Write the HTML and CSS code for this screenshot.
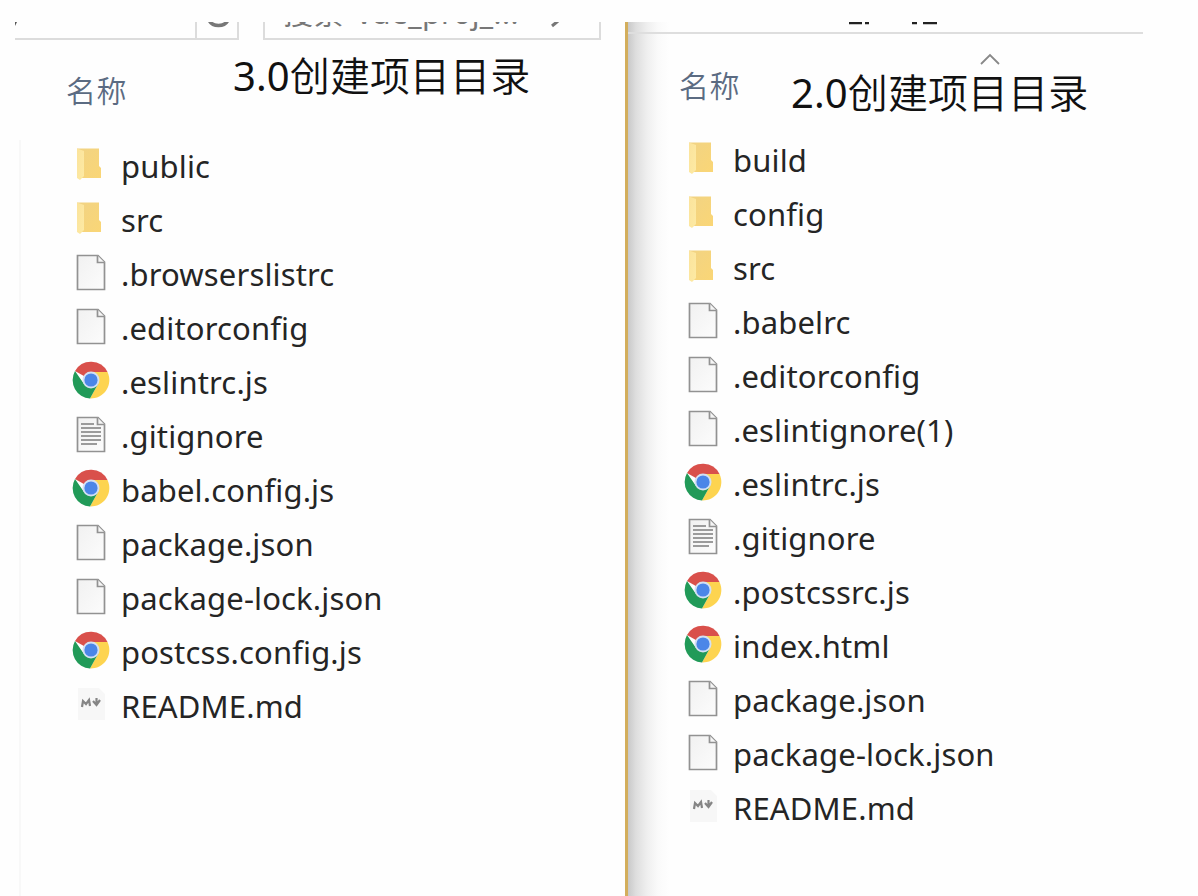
FILE: index.html
```
<!DOCTYPE html>
<html lang="zh-CN">
<head>
    <meta charset="UTF-8">
    <meta name="viewport" content="width=device-width, initial-scale=1.0">
    <title>项目目录</title>
    <link rel="stylesheet" href="styles.css">
</head>
<body>
    <svg class="sprite" aria-hidden="true">
        <defs>
            <linearGradient id="folder-front" x1="0" y1="0" x2="1" y2="1">
                <stop offset="0" stop-color="#fbe39b"/>
                <stop offset="1" stop-color="#fdeaa4"/>
            </linearGradient>
            <linearGradient id="folder-back" x1="0" y1="0" x2="1" y2="1">
                <stop offset="0" stop-color="#f1d384"/>
                <stop offset="1" stop-color="#fad676"/>
            </linearGradient>
            <linearGradient id="paper" x1="0" y1="0" x2="1" y2="1">
                <stop offset="0" stop-color="#f1f1f1"/>
                <stop offset="1" stop-color="#fcfcfc"/>
            </linearGradient>
        </defs>
        <symbol id="folder" viewBox="0 0 38 38">
            <path d="M5 3.500H27V21L29 23V33H9Z" fill="url(#folder-back)"/>
            <path d="M5 3.500L12 6V31L8 35L5 33Z" fill="url(#folder-front)"/>
        </symbol>
        <symbol id="file" viewBox="0 0 38 38">
            <path d="M5.500 2.500H26L32.500 9V36.500H5.500Z" fill="url(#paper)" stroke="#929292" stroke-width="1.700"/>
            <path d="M25.500 2.500V9.500H32.500" fill="#f5f5f5" stroke="#929292" stroke-width="1.700"/>
        </symbol>
        <symbol id="text" viewBox="0 0 38 38">
            <use href="#file"/>
            <path d="M9 9H22M9 13H29M9 17H29M9 21H29M9 25H29M9 29H25" stroke="#9b9b9b" stroke-width="1.800"/>
        </symbol>
        <symbol id="chrome" viewBox="0 0 38 38">
            <path d="M19 19L3 10A18.500 18.500 0 0 1 35.500 11Z" fill="#d9504b"/>
            <path d="M19 11H35.500A18.500 18.500 0 0 1 18 37.500L26 23Z" fill="#fdd450"/>
            <path d="M3 10A18.500 18.500 0 0 0 18 37.500L26 23L12 23Z" fill="#219a58"/>
            <circle cx="19" cy="19" r="8.500" fill="#d3e0f3"/>
            <circle cx="19" cy="19" r="6.600" fill="#4b86e8"/>
        </symbol>
        <symbol id="markdown" viewBox="0 0 38 38">
            <path d="M6 3H27L33 9V35H6Z" fill="#f7f7f7"/>
            <path d="M10 22L11 16L14 19L17 15L18 21M24.500 13V19M21 16L24.500 20L28 15" fill="none" stroke="#858585" stroke-width="2.200"/>
        </symbol>
    </svg>

    <div class="screen">
        <div class="pane pane-left">
            <div class="toolbar">
                <div class="address">
                    <svg width="4" height="4" viewBox="0 0 4 4"><path d="M0 4V0H2Z" fill="#555"/></svg>
                </div>
                <div class="refresh">
                    <svg width="30" height="8" viewBox="0 0 30 8"><path d="M4 -2A10 8 0 0 0 23 -2" fill="none" stroke="#777" stroke-width="3.500"/></svg>
                </div>
                <div class="search">
                    <span class="search-text">搜索"vue_proj_..."</span>
                    <svg width="12" height="8" viewBox="0 0 12 8"><path d="M9 -1L3 4" stroke="#777" stroke-width="3"/></svg>
                </div>
            </div>
            <div class="heading">
                <span class="column-name">名称</span>
                <h1 class="title"><span class="version">3.0</span>创建项目目录</h1>
            </div>
            <ul class="files">
                <li><svg class="icon"><use href="#folder"/></svg><span>public</span></li>
                <li><svg class="icon"><use href="#folder"/></svg><span>src</span></li>
                <li><svg class="icon"><use href="#file"/></svg><span>.browserslistrc</span></li>
                <li><svg class="icon"><use href="#file"/></svg><span>.editorconfig</span></li>
                <li><svg class="icon"><use href="#chrome"/></svg><span>.eslintrc.js</span></li>
                <li><svg class="icon"><use href="#text"/></svg><span>.gitignore</span></li>
                <li><svg class="icon"><use href="#chrome"/></svg><span>babel.config.js</span></li>
                <li><svg class="icon"><use href="#file"/></svg><span>package.json</span></li>
                <li><svg class="icon"><use href="#file"/></svg><span>package-lock.json</span></li>
                <li><svg class="icon"><use href="#chrome"/></svg><span>postcss.config.js</span></li>
                <li><svg class="icon"><use href="#markdown"/></svg><span>README.md</span></li>
            </ul>
        </div>

        <div class="pane pane-right">
            <div class="ribbon">
                <svg width="100" height="3" viewBox="0 0 100 3"><path d="M2 1H15M18 1H22M65 1H70M76 1H90" stroke="#222" stroke-width="2.500"/></svg>
            </div>
            <svg class="sort-arrow" viewBox="0 0 20 12"><path d="M1 11L10 2L19 11" fill="none" stroke="#888" stroke-width="1.800"/></svg>
            <div class="heading">
                <span class="column-name">名称</span>
                <h1 class="title"><span class="version">2.0</span>创建项目目录</h1>
            </div>
            <ul class="files">
                <li><svg class="icon"><use href="#folder"/></svg><span>build</span></li>
                <li><svg class="icon"><use href="#folder"/></svg><span>config</span></li>
                <li><svg class="icon"><use href="#folder"/></svg><span>src</span></li>
                <li><svg class="icon"><use href="#file"/></svg><span>.babelrc</span></li>
                <li><svg class="icon"><use href="#file"/></svg><span>.editorconfig</span></li>
                <li><svg class="icon"><use href="#file"/></svg><span>.eslintignore(1)</span></li>
                <li><svg class="icon"><use href="#chrome"/></svg><span>.eslintrc.js</span></li>
                <li><svg class="icon"><use href="#text"/></svg><span>.gitignore</span></li>
                <li><svg class="icon"><use href="#chrome"/></svg><span>.postcssrc.js</span></li>
                <li><svg class="icon"><use href="#chrome"/></svg><span>index.html</span></li>
                <li><svg class="icon"><use href="#file"/></svg><span>package.json</span></li>
                <li><svg class="icon"><use href="#file"/></svg><span>package-lock.json</span></li>
                <li><svg class="icon"><use href="#markdown"/></svg><span>README.md</span></li>
            </ul>
        </div>
    </div>
</body>
</html>
```
FILE: styles.css
```
* {
    box-sizing: border-box;
}
body {
    margin: 0;
    padding: 22px 55px 0 15px;
    height: 896px;
    overflow: hidden;
    background: #fefefe;
    color: #252525;
    font-family: "Noto Sans", "Noto Sans CJK SC", sans-serif;
}
svg {
    display: block;
    flex-shrink: 0;
}
.sprite {
    position: absolute;
    width: 0;
    height: 0;
}
.screen {
    display: flex;
    height: 874px;
}
.pane {
    display: flex;
    flex-direction: column;
}
.pane-left {
    width: 610px;
}
.pane-right {
    flex: 1;
    border-left: 3px solid #d3ae5c;
    background: linear-gradient(to right, #c9c9c9 0, #dedede 8px, #efefef 19px, #fafafa 30px, #fefefe 42px);
}
.toolbar {
    display: flex;
    height: 18px;
    overflow: hidden;
}
.address {
    width: 180px;
    border-bottom: 2px solid #dcdcdc;
}
.refresh {
    width: 44px;
    padding-left: 8px;
    border: solid #dcdcdc;
    border-width: 0 2px 2px;
}
.search {
    display: flex;
    justify-content: space-between;
    width: 338px;
    margin-left: 24px;
    padding: 0 38px 0 18px;
    overflow: hidden;
    border: solid #dcdcdc;
    border-width: 0 2px 2px;
}
.search-text {
    margin-top: -25px;
    color: #777;
    font-size: 30px;
    line-height: 32px;
    letter-spacing: 0.4px;
    white-space: nowrap;
}
.heading {
    display: flex;
    align-items: flex-start;
}
.column-name {
    color: #5b6b82;
    font-family: "Noto Sans CJK SC", sans-serif;
    font-size: 30px;
    font-weight: 350;
    line-height: 40px;
    letter-spacing: 0.5px;
}
.title {
    margin: 0;
    color: #111;
    font-size: 40px;
    font-weight: 350;
    line-height: 56px;
    letter-spacing: 0.1px;
    white-space: nowrap;
}
.version {
    font-weight: 400;
}
.pane-left .heading {
    height: 100px;
    padding: 8px 0 0 51px;
}
.pane-left .column-name {
    padding-top: 21px;
}
.pane-left .title {
    margin-left: 106px;
}
.ribbon {
    height: 12px;
    padding-left: 219px;
    border-bottom: 2px solid #dedede;
}
.sort-arrow {
    width: 20px;
    height: 12px;
    margin: 19px 0 0 352px;
}
.pane-right .heading {
    height: 69px;
    padding-left: 51px;
}
.pane-right .column-name {
    margin-top: -1px;
}
.pane-right .title {
    margin-left: 51px;
}
.files {
    margin: 0;
    padding: 0 0 0 56px;
    list-style: none;
}
.files li {
    display: flex;
    align-items: center;
    height: 54px;
    font-size: 31px;
    line-height: 52px;
    letter-spacing: 0.15px;
}
.files span {
    padding-bottom: 2px;
}
.icon {
    width: 38px;
    height: 38px;
    margin: 0 11px 6px 0;
}
.pane-left .files {
    flex: 1;
    border-left: 2px solid #f8f8f8;
    margin-left: 4px;
    padding-left: 51px;
}
```
